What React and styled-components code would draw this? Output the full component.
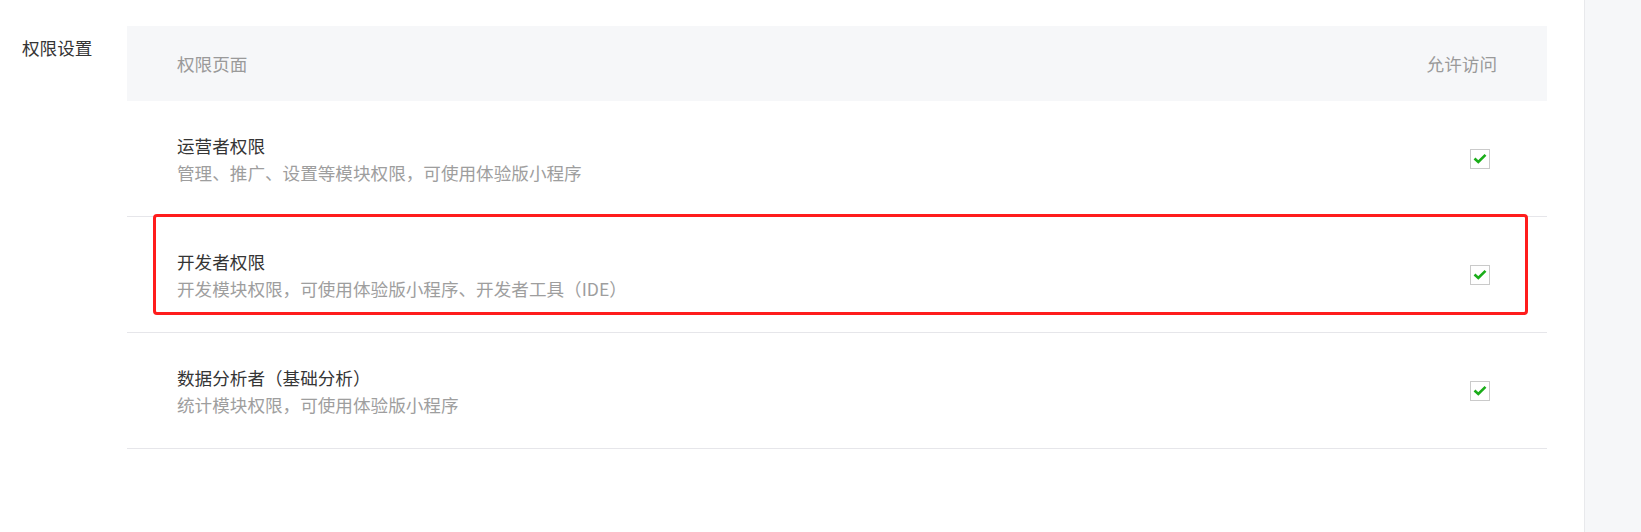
import React from "react";
import styled, { createGlobalStyle } from "styled-components";

const GlobalStyle = createGlobalStyle`
  html, body { margin: 0; padding: 0; background: #fff; }
  body { font-family: "Noto Sans CJK SC", "Noto Sans", sans-serif; }
`;

const Page = styled.div`
  display: flex;
  width: 1641px;
  height: 532px;
  overflow: hidden;
`;

const Main = styled.div`
  flex: 0 0 1584px;
  display: flex;
  align-items: flex-start;
  padding-top: 26px;
  box-sizing: border-box;
`;

const Label = styled.div`
  flex: 0 0 127px;
  box-sizing: border-box;
  padding-left: 22px;
  padding-top: 10px;
  font-size: 17.6px;
  line-height: 24px;
  color: #353535;
  white-space: nowrap;
`;

const Table = styled.div`
  flex: 0 0 1420px;
  display: flex;
  flex-direction: column;
`;

const Header = styled.div`
  height: 75px;
  background: #f6f7f9;
  display: flex;
  align-items: center;
  justify-content: space-between;
  padding: 0 50px;
  font-size: 17.6px;
  color: #9a9a9a;
`;

const Row = styled.div`
  position: relative;
  height: 115px;
  border-bottom: 1px solid #e6e6ea;
  display: flex;
  align-items: center;
  justify-content: space-between;
  padding: 0 57px 0 50px;
`;

const Info = styled.div`
  display: flex;
  flex-direction: column;
  font-size: 17.6px;
  line-height: 27px;
`;

const Title = styled.div`
  color: #353535;
`;

const Desc = styled.div`
  color: #9e9e9e;
`;

const Check = styled.span`
  width: 20px;
  height: 20px;
  box-sizing: border-box;
  border: 1px solid #cacaca;
  background: #fff;
  display: flex;
  align-items: center;
  justify-content: center;
`;

const Highlight = styled.div`
  position: absolute;
  left: 26px;
  right: 19px;
  top: -3px;
  height: 101px;
  box-sizing: border-box;
  border: 3px solid #ff1d1d;
  border-radius: 4px;
  pointer-events: none;
`;

const Side = styled.div`
  flex: 1;
  background: #f6f7f9;
  border-left: 1px solid #e8e9ec;
`;

const CheckIcon = () => (
  <svg width="14" height="11" viewBox="0 0 14 11">
    <path d="M1.5 5.5 L5.3 9 L12.5 1.8" fill="none" stroke="#1aad19" strokeWidth="2.6" strokeLinecap="butt" strokeLinejoin="miter" />
  </svg>
);

const rows = [
  { title: "运营者权限", desc: "管理、推广、设置等模块权限，可使用体验版小程序" },
  { title: "开发者权限", desc: "开发模块权限，可使用体验版小程序、开发者工具（IDE）", highlight: true },
  { title: "数据分析者（基础分析）", desc: "统计模块权限，可使用体验版小程序" },
];

export default function App() {
  return (
    <>
      <GlobalStyle />
      <Page>
        <Main>
          <Label>权限设置</Label>
          <Table>
            <Header>
              <span>权限页面</span>
              <span>允许访问</span>
            </Header>
            {rows.map((r) => (
              <Row key={r.title}>
                <Info>
                  <Title>{r.title}</Title>
                  <Desc>{r.desc}</Desc>
                </Info>
                <Check>
                  <CheckIcon />
                </Check>
                {r.highlight && <Highlight />}
              </Row>
            ))}
          </Table>
        </Main>
        <Side />
      </Page>
    </>
  );
}
